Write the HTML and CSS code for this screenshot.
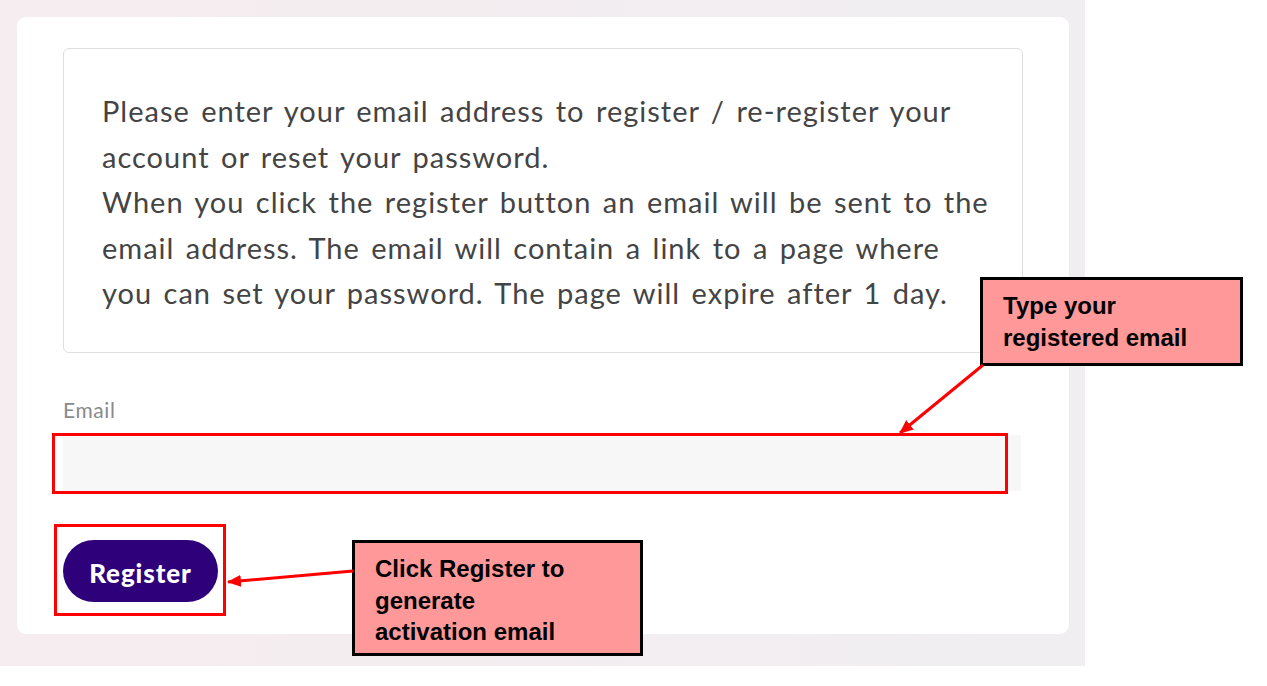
FILE: index.html
```html
<!DOCTYPE html>
<html lang="en">
<head>
    <meta charset="UTF-8">
    <meta name="viewport" content="width=device-width, initial-scale=1.0">
    <title>Register</title>
    <link rel="stylesheet" href="styles.css">
</head>
<body>
    <div class="page">
        <main class="card">
            <div class="info">
                <p>Please enter your email address to register / re-register your account or reset your password.</p>
                <p>When you click the register button an email will be sent to the email address. The email will contain a link to a page where you can set your password. The page will expire after 1 day.</p>
            </div>

            <form class="form">
                <label for="email">Email</label>
                <div class="field">
                    <input type="email" id="email">
                </div>
                <div class="actions">
                    <button type="button">Register</button>
                </div>
            </form>
        </main>

        <!-- annotation layer -->
        <div class="note note-email">Type your<br>registered email</div>
        <div class="note note-button">Click Register to<br>generate<br>activation email</div>

        <svg class="arrows" width="1267" height="686" viewBox="0 0 1267 686">
            <defs>
                <marker id="head" markerWidth="14" markerHeight="12" refX="13" refY="6" orient="auto" markerUnits="userSpaceOnUse">
                    <path d="M0,0 L14,6 L0,12 z" fill="#ff0000"/>
                </marker>
            </defs>
            <line x1="983" y1="365" x2="900" y2="433" stroke="#ff0000" stroke-width="3" marker-end="url(#head)"/>
            <line x1="353" y1="571" x2="228" y2="582" stroke="#ff0000" stroke-width="3" marker-end="url(#head)"/>
        </svg>
    </div>
</body>
</html>
```

FILE: styles.css
```css
body {
    margin: 0;
    padding: 0;
    background: #fff;
    font-family: Lato, 'Open Sans', sans-serif;
}

.page {
    position: relative;
    width: 1267px;
    height: 686px;
    box-sizing: border-box;
    padding: 17px 0 0 17px;
}

.page::before {
    content: "";
    position: absolute;
    left: 0;
    top: 0;
    width: 1085px;
    height: 666px;
    background: linear-gradient(to right, #f6edf0, #f0eef1);
}

.card {
    position: relative;
    width: 1052px;
    height: 617px;
    box-sizing: border-box;
    padding: 31px 46px 0 46px;
    background: #fff;
    border-radius: 9px;
}

.info {
    width: 960px;
    height: 305px;
    box-sizing: border-box;
    padding: 39px 25px 0 38px;
    border: 1.5px solid #dedede;
    border-radius: 6px;
    color: #444;
    font-size: 29px;
    line-height: 45.5px;
    letter-spacing: 1px;
    word-spacing: 3px;
}

.info p {
    margin: 0;
}

.form {
    display: flex;
    flex-direction: column;
    margin-top: 44px;
}

label {
    color: #8a8a8a;
    font-size: 21px;
    line-height: 26px;
    letter-spacing: 0.6px;
}

.field {
    position: relative;
    margin-top: 12px;
    width: 958px;
}

.field::after {
    content: "";
    position: absolute;
    left: -11px;
    top: -2px;
    width: 956px;
    height: 61px;
    box-sizing: border-box;
    border: 3px solid #ff0000;
    pointer-events: none;
}

input {
    display: block;
    width: 958px;
    height: 56px;
    box-sizing: border-box;
    border: none;
    background: #f7f7f7;
    outline: none;
}

.actions {
    position: relative;
    margin-top: 49px;
    width: 155px;
}

.actions::after {
    content: "";
    position: absolute;
    left: -9px;
    top: -16px;
    width: 172px;
    height: 92px;
    box-sizing: border-box;
    border: 3px solid #ff0000;
}

button {
    display: block;
    width: 155px;
    height: 62px;
    padding-top: 4px;
    border: none;
    border-radius: 31px;
    background: #2e0079;
    color: #fff;
    font-family: Lato, sans-serif;
    font-weight: 900;
    font-size: 26px;
    letter-spacing: 0.9px;
}

.note {
    position: absolute;
    box-sizing: border-box;
    border: 3px solid #000;
    background: #ff9999;
    color: #000;
    font-family: 'Liberation Sans', Arial, sans-serif;
    font-weight: 700;
    font-size: 24px;
}

.note-email {
    left: 980px;
    top: 277px;
    width: 263px;
    height: 89px;
    padding: 10px 0 0 20px;
    line-height: 32px;
}

.note-button {
    left: 352px;
    top: 540px;
    width: 291px;
    height: 116px;
    padding: 10px 0 0 20px;
    line-height: 31.5px;
}

.arrows {
    position: absolute;
    left: 0;
    top: 0;
    pointer-events: none;
}
```
